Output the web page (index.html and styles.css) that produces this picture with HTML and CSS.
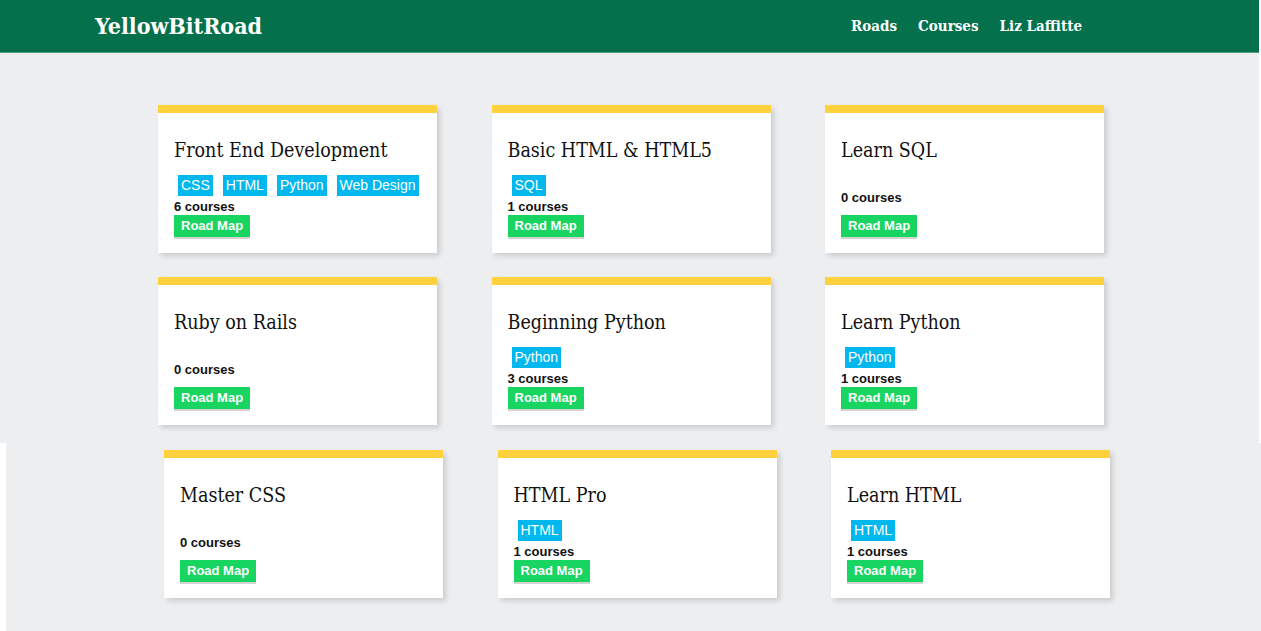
FILE: index.html
```html
<!DOCTYPE html>
<html lang="en">
<head>
<meta charset="utf-8">
<title>YellowBitRoad</title>
<link rel="stylesheet" href="styles.css">
</head>
<body>
<div class="top">
  <header class="header">
    <div class="brand">YellowBitRoad</div>
    <nav class="nav">
      <a class="nav-link" href="#">Roads</a>
      <a class="nav-link" href="#">Courses</a>
      <a class="nav-link" href="#">Liz Laffitte</a>
    </nav>
  </header>
  <main class="grid grid-first">
    <div class="card">
      <h2 class="card-title">Front End Development</h2>
      <div class="tags">
        <span class="tag">CSS</span><span class="tag">HTML</span><span class="tag">Python</span><span class="tag">Web Design</span>
      </div>
      <p class="count">6 courses</p>
      <a class="btn" href="#">Road Map</a>
    </div>
    <div class="card">
      <h2 class="card-title">Basic HTML &amp; HTML5</h2>
      <div class="tags"><span class="tag">SQL</span></div>
      <p class="count">1 courses</p>
      <a class="btn" href="#">Road Map</a>
    </div>
    <div class="card">
      <h2 class="card-title">Learn SQL</h2>
      <p class="count count-solo">0 courses</p>
      <a class="btn" href="#">Road Map</a>
    </div>
    <div class="card">
      <h2 class="card-title">Ruby on Rails</h2>
      <p class="count count-solo">0 courses</p>
      <a class="btn" href="#">Road Map</a>
    </div>
    <div class="card">
      <h2 class="card-title">Beginning Python</h2>
      <div class="tags"><span class="tag">Python</span></div>
      <p class="count">3 courses</p>
      <a class="btn" href="#">Road Map</a>
    </div>
    <div class="card">
      <h2 class="card-title">Learn Python</h2>
      <div class="tags"><span class="tag">Python</span></div>
      <p class="count">1 courses</p>
      <a class="btn" href="#">Road Map</a>
    </div>
  </main>
</div>
<div class="bottom">
  <div class="grid grid-last">
    <div class="card">
      <h2 class="card-title">Master CSS</h2>
      <p class="count count-solo">0 courses</p>
      <a class="btn" href="#">Road Map</a>
    </div>
    <div class="card">
      <h2 class="card-title">HTML Pro</h2>
      <div class="tags"><span class="tag">HTML</span></div>
      <p class="count">1 courses</p>
      <a class="btn" href="#">Road Map</a>
    </div>
    <div class="card">
      <h2 class="card-title">Learn HTML</h2>
      <div class="tags"><span class="tag">HTML</span></div>
      <p class="count">1 courses</p>
      <a class="btn" href="#">Road Map</a>
    </div>
  </div>
</div>
</body>
</html>
```
FILE: styles.css
```css
* { box-sizing: border-box; }

html, body {
  margin: 0;
  padding: 0;
  background: #ffffff;
}

body {
  font-family: "Liberation Sans", Arial, sans-serif;
  color: #111;
  overflow: hidden;
  height: 631px;
}

.top {
  width: 1259px;
  background: #eceef0;
}

.header {
  height: 53px;
  background: #04704c;
  border-bottom: 1px solid #4e9c7c;
  display: flex;
  align-items: center;
  justify-content: space-between;
  padding: 0 177px 0 95px;
}

.brand {
  font-family: "DejaVu Serif", serif;
  font-stretch: condensed;
  font-weight: bold;
  font-size: 23px;
  color: #ffffff;
  margin-top: -2px;
}

.nav {
  display: flex;
  gap: 21px;
  margin-top: -1px;
}

.nav-link {
  font-family: "DejaVu Serif", serif;
  font-stretch: condensed;
  font-weight: bold;
  font-size: 15px;
  color: #ffffff;
  text-decoration: none;
}

.grid {
  display: grid;
  grid-template-columns: repeat(3, 279px);
  column-gap: 54.5px;
  row-gap: 24px;
  padding-left: 158px;
}

.grid-first {
  padding-top: 52px;
  padding-bottom: 18px;
}

.bottom {
  margin-left: 6px;
  background: #eceef0;
  height: 188px;
}

.grid-last {
  padding-top: 7px;
}

.card {
  background: #ffffff;
  border-top: 8px solid #ffd23d;
  height: 148px;
  padding: 26px 16px 0 16px;
  box-shadow: 3px 3px 5px rgba(0, 0, 0, 0.14);
  display: flex;
  flex-direction: column;
  align-items: flex-start;
}

.card-title {
  margin: 0 0 12px 0;
  font-family: "DejaVu Serif", serif;
  font-stretch: condensed;
  font-weight: normal;
  font-size: 19.5px;
  line-height: 24px;
  color: #111;
  white-space: nowrap;
}

.tags {
  display: flex;
  gap: 10px;
  padding-left: 4px;
  height: 22px;
}

.tag {
  flex-shrink: 0;
  white-space: nowrap;
  background: #00b8ee;
  color: #ffffff;
  font-size: 14px;
  line-height: 21px;
  height: 21px;
  padding: 0 3px;
}

.count {
  margin: 0;
  padding-top: 1px;
  font-size: 13px;
  font-weight: bold;
  line-height: 17px;
  color: #111;
}

.count-solo {
  margin-top: 13px;
  margin-bottom: 9px;
}

.btn {
  display: block;
  background: #18d461;
  color: #ffffff;
  font-size: 13px;
  font-weight: bold;
  line-height: 22px;
  height: 22px;
  padding: 0 7px;
  text-decoration: none;
  box-shadow: 0 2px 0 #d3d3d3;
}
```
